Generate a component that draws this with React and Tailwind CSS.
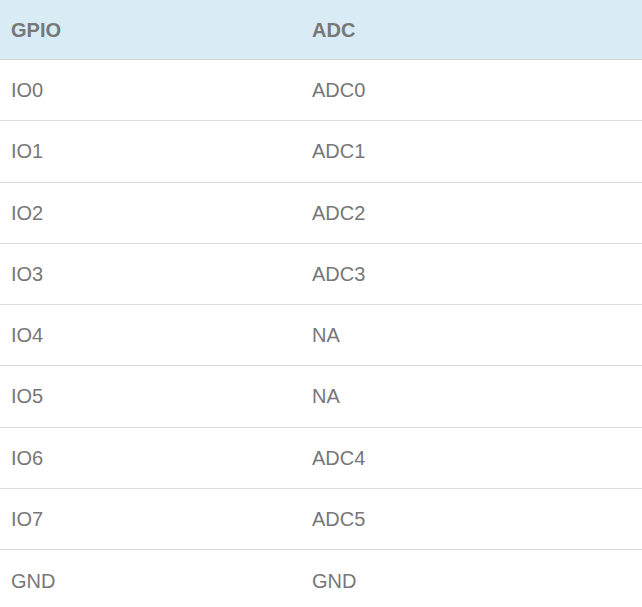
import React from 'react';

const rows = [
  ['IO0', 'ADC0'],
  ['IO1', 'ADC1'],
  ['IO2', 'ADC2'],
  ['IO3', 'ADC3'],
  ['IO4', 'NA'],
  ['IO5', 'NA'],
  ['IO6', 'ADC4'],
  ['IO7', 'ADC5'],
  ['GND', 'GND'],
];

const App = () => {
  return (
    <div className="w-[642px] h-[607px] overflow-hidden bg-white font-['Liberation_Sans',Arial,sans-serif] text-[#777]">
      <div className="grid grid-cols-[301px_1fr] h-[60px] items-center bg-[#d9ecf5] border-b border-[#d4d4d4] text-[20px] font-bold">
        <div className="pl-[11px]">GPIO</div>
        <div className="pl-[11px]">ADC</div>
      </div>
      {rows.map(([gpio, adc], i) => (
        <div
          key={gpio}
          className={`grid grid-cols-[301px_1fr] h-[61.25px] items-center text-[20px] ${i < rows.length - 1 ? 'border-b border-[#dcdcdc]' : ''}`}
        >
          <div className="pl-[11px]">{gpio}</div>
          <div className="pl-[11px]">{adc}</div>
        </div>
      ))}
    </div>
  );
};

export default App;
